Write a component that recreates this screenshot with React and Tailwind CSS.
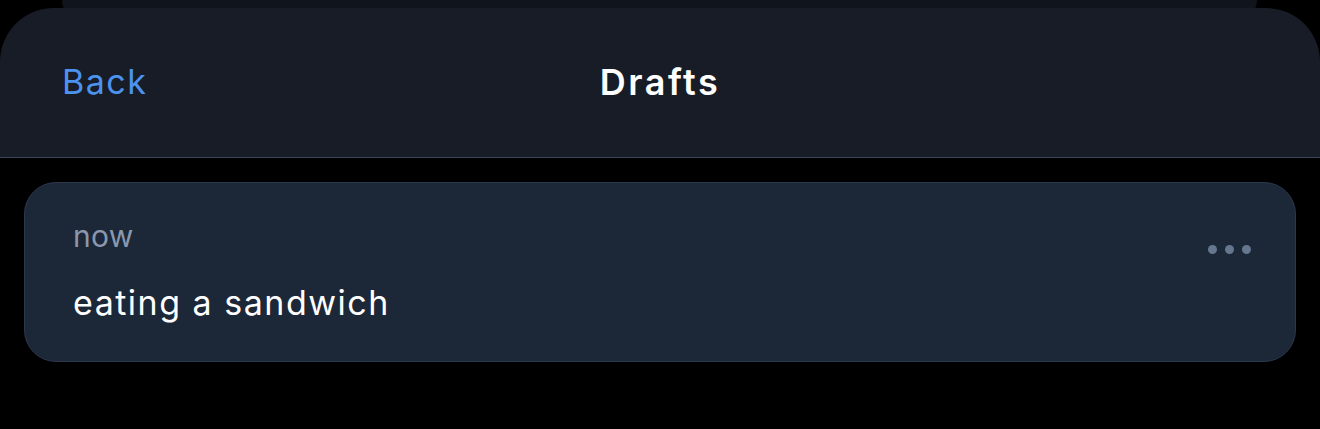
export default function App() {
  return (
    <div className="w-[1320px] h-[429px] bg-black overflow-hidden relative" style={{ fontFamily: "Inter, 'Noto Sans', sans-serif" }}>
      <div className="absolute left-[62px] right-[63px] top-0 h-[20px] bg-[#10141c] rounded-b-[20px]" />
      <div className="relative pt-[8px]">
        <div className="bg-[#171c27] rounded-t-[54px] h-[150px] border-b border-[#3b4458] flex items-center px-[62px] relative">
          <button className="text-[#4c93ef] text-[34px] leading-none tracking-[1.5px] -mt-[2px]">Back</button>
          <div className="absolute inset-x-0 top-0 bottom-0 flex items-center justify-center pointer-events-none">
            <span className="text-white text-[36px] font-semibold leading-none tracking-[2.5px] -mt-[2px]">Drafts</span>
          </div>
        </div>
      </div>
      <div className="px-[24px] pt-[24px]">
        <div className="h-[180px] rounded-[32px] bg-[#1c2738] border border-[#2b374b] pl-[48px] pr-[44px] flex items-start justify-between">
          <div className="flex flex-col pt-[38px]">
            <span className="text-[#8a98ad] text-[30px] leading-none tracking-[0.3px]">now</span>
            <span className="text-white text-[34px] leading-none mt-[35px] tracking-[1.5px]">eating a sandwich</span>
          </div>
          <div className="flex gap-[8px] mt-[62px]">
            <span className="w-[9px] h-[9px] rounded-full bg-[#66768f]" />
            <span className="w-[9px] h-[9px] rounded-full bg-[#66768f]" />
            <span className="w-[9px] h-[9px] rounded-full bg-[#66768f]" />
          </div>
        </div>
      </div>
    </div>
  );
}
